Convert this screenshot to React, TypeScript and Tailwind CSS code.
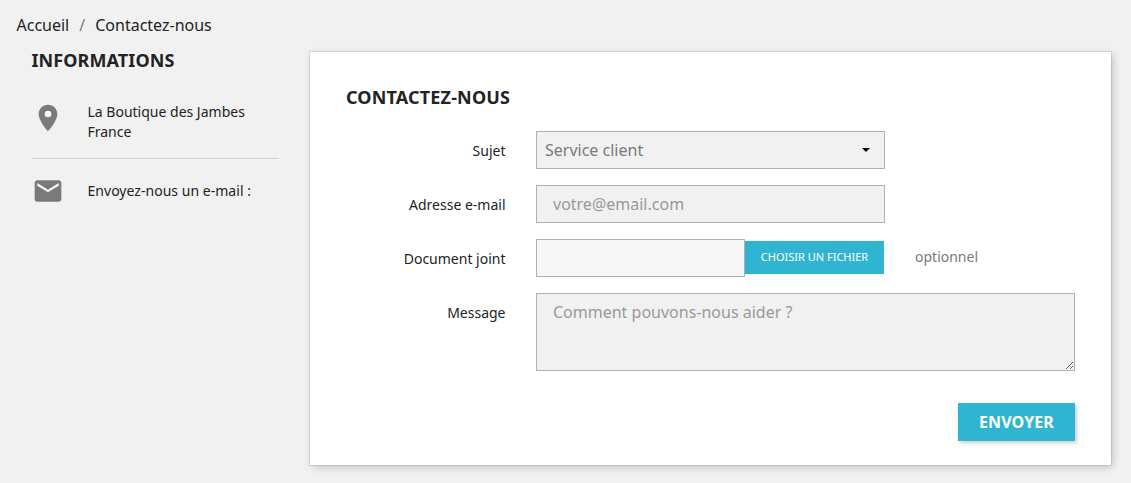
import React from 'react';

function Row({ label, children }: { label: string; children: React.ReactNode }) {
  return (
    <div className="flex items-start">
      <label className="w-[159.5px] shrink-0 pt-[10px] text-right text-[14px] leading-[20px] text-[#232323]">{label}</label>
      <div className="ml-[30.5px] flex items-start">{children}</div>
    </div>
  );
}

export default function App() {
  return (
    <div className="h-[483px] w-[1131px] overflow-hidden bg-[#f1f1f1] font-['Noto_Sans',sans-serif] text-[#232323]">
      <nav className="flex h-[52px] pt-[13px] pl-[16.5px] text-[16px] leading-[24px]">
        <span>Accueil</span>
        <span className="mx-[10px] text-[#7a7a7a]">/</span>
        <span>Contactez-nous</span>
      </nav>
      <div className="flex items-start">
        <aside className="-mt-[2px] ml-[31.5px] w-[247.5px]">
          <h4 className="text-[18px] leading-[20px] font-bold tracking-[0.09px]">INFORMATIONS</h4>
          <div className="mt-[32px] flex h-[57px] border-b border-[#d3d3d3]">
            <svg viewBox="0 0 24 24" className="h-[32px] w-[32px] fill-[#7a7a7a]">
              <circle cx="12" cy="9" r="3" className="fill-[#fafafa]" />
              <path d="M12 2C8.13 2 5 5.13 5 9c0 5.25 7 13 7 13s7-7.75 7-13c0-3.87-3.13-7-7-7zm0 9.500a2.500 2.500 0 0 1 0-5 2.500 2.500 0 0 1 0 5z" />
            </svg>
            <p className="ml-[24px] text-[14px] leading-[20px]">La Boutique des Jambes<br />France</p>
          </div>
          <div className="mt-[16px] flex items-center">
            <svg viewBox="0 0 24 24" className="h-[32px] w-[32px] fill-[#7a7a7a]">
              <path d="M3.500 5h17v4L12 14 3.500 9z" className="fill-[#fafafa]" />
              <path d="M20 4H4c-1.100 0-1.990.900-1.990 2L2 18c0 1.100.900 2 2 2h16c1.100 0 2-.900 2-2V6c0-1.100-.900-2-2-2zm0 4l-8 5-8-5V6l8 5 8-5v2z" />
            </svg>
            <p className="ml-[24px] text-[14px] leading-[20px] tracking-[0.03px]">Envoyez-nous un e-mail :</p>
          </div>
        </aside>
        <section className="ml-[31px] h-[413px] w-[801px] bg-white pt-[35px] pl-[36px] shadow-[0_0_0_1px_rgba(0,0,0,0.08),2px_2px_8px_0_rgba(0,0,0,0.2)]">
          <h3 className="text-[18px] leading-[20px] font-bold tracking-[0.16px]">CONTACTEZ-NOUS</h3>
          <form className="mt-[24px] flex flex-col gap-[16px]">
            <Row label="Sujet">
              <div className="flex h-[38px] w-[349px] items-center justify-between border border-[#b0b0b0] bg-[#f1f1f1] pr-[14px] pl-[8px] text-[16px] text-[#7a7a7a]">
                <span>Service client</span>
                <svg viewBox="0 0 8 4" className="h-[4px] w-[8px] fill-black"><path d="M0 0h8L4 4z" /></svg>
              </div>
            </Row>
            <Row label="Adresse e-mail">
              <input placeholder="votre@email.com" className="h-[38px] w-[349px] border border-[#b0b0b0] bg-[#f1f1f1] px-[16px] text-[16px] outline-none placeholder:text-[#999]" />
            </Row>
            <Row label="Document joint">
              <div className="h-[38px] w-[209px] border border-[#b0b0b0] bg-[#f6f6f6]" />
              <button type="button" className="mt-[2px] h-[33px] w-[139px] bg-[#2fb5d2] text-[11px] text-white">CHOISIR UN FICHIER</button>
              <span className="mt-[8px] ml-[31px] text-[14px] leading-[20px] text-[#7a7a7a]">optionnel</span>
            </Row>
            <Row label="Message">
              <textarea placeholder="Comment pouvons-nous aider ?" className="block h-[78px] w-[539px] resize border border-[#b0b0b0] bg-[#f1f1f1] px-[16px] py-[6px] text-[16px] leading-[24px] outline-none placeholder:text-[#999]" />
            </Row>
          </form>
          <div className="mt-[32px] mr-[36px] flex justify-end">
            <button className="h-[38px] w-[117px] bg-[#2fb5d2] text-[16px] font-bold tracking-[0.1px] text-white shadow-[2px_2px_4px_rgba(0,0,0,0.2)]">ENVOYER</button>
          </div>
        </section>
      </div>
    </div>
  );
}
